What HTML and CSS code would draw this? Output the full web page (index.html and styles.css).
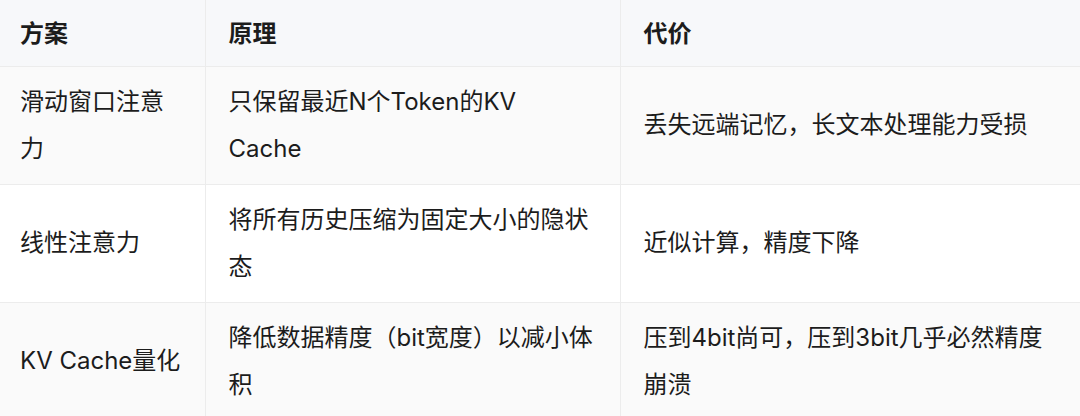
FILE: index.html
```html
<!DOCTYPE html>
<html lang="zh-CN">
<head>
<meta charset="utf-8">
<link rel="stylesheet" href="styles.css">
</head>
<body>
<table class="cmp">
  <colgroup>
    <col class="c1"><col class="c2"><col class="c3">
  </colgroup>
  <thead>
    <tr><th>方案</th><th>原理</th><th>代价</th></tr>
  </thead>
  <tbody>
    <tr>
      <td>滑动窗口注意力</td>
      <td class="mid">只保留最近N个Token的KV Cache</td>
      <td>丢失远端记忆，长文本处理能力受损</td>
    </tr>
    <tr>
      <td>线性注意力</td>
      <td class="mid">将所有历史压缩为固定大小的隐状态</td>
      <td>近似计算，精度下降</td>
    </tr>
    <tr>
      <td>KV Cache量化</td>
      <td class="mid">降低数据精度（bit宽度）以减小体积</td>
      <td>压到4bit尚可，压到3bit几乎必然精度崩溃</td>
    </tr>
  </tbody>
</table>
</body>
</html>
```

FILE: styles.css
```css
html, body {
  margin: 0;
  padding: 0;
  background: #ffffff;
}
body {
  font-family: Inter, "Noto Sans CJK SC", sans-serif;
  color: #1c1c1c;
  font-size: 24px;
}
.cmp {
  width: 1080px;
  border-collapse: collapse;
  table-layout: fixed;
}
.c1 { width: 205px; }
.c2 { width: 415px; }
.c3 { width: 460px; }
.cmp th, .cmp td {
  text-align: left;
  vertical-align: middle;
  padding: 12px 23px;
  line-height: 46.5px;
  border-left: 1px solid #ececec;
  border-bottom: 1px solid #ececec;
}
.cmp td.mid {
  padding-right: 25px;
}
.cmp th:first-child, .cmp td:first-child {
  border-left: none;
  padding-left: 20px;
}
.cmp th {
  font-weight: 700;
  background: #f7f8fa;
  padding-top: 10px;
  padding-bottom: 9px;
  line-height: 47px;
}
.cmp tbody tr:nth-child(odd) td {
  background: #fafafa;
}
```
